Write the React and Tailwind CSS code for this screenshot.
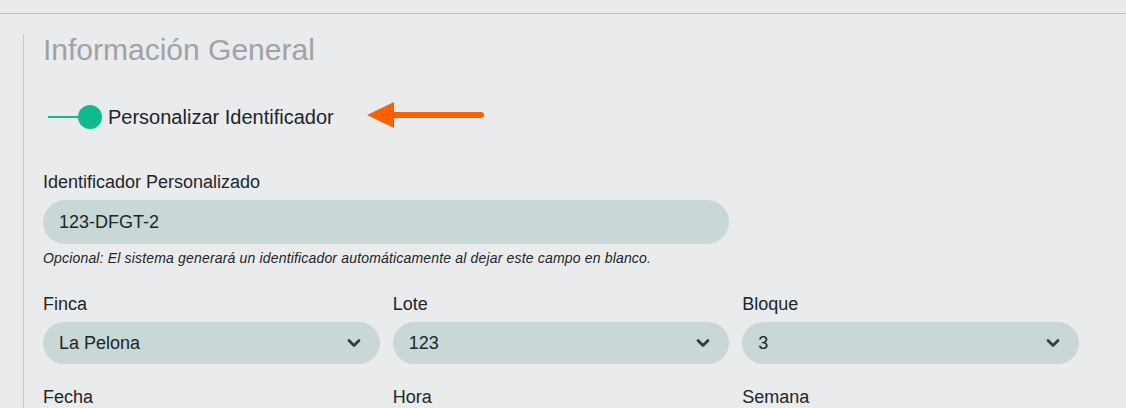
import { ChevronDown } from 'lucide-react';

function SelectField({ label, value }) {
  return (
    <div className="flex flex-col">
      <label className="text-[18px] text-[#212529] mb-[6px] leading-6">{label}</label>
      <div className="flex items-center justify-between h-[42px] rounded-full bg-[#c9d7d7] pl-4 pr-[16px]">
        <span className="text-[18px] text-[#212529]">{value}</span>
        <ChevronDown size={20} strokeWidth={3.2} className="text-[#343a40]" />
      </div>
    </div>
  );
}

export default function App() {
  return (
    <div className="min-h-screen bg-[#eaebed] font-['Liberation_Sans',Arial,sans-serif] overflow-hidden">
      <div className="h-[14px] border-b border-[#bdbdbd]" />
      <div className="ml-[23px] mt-5 border-l border-[#c8c8c8] pl-[19px] pr-[47px]">
        <h2 className="text-[30px] leading-8 text-[#a0a2a6]">Información General</h2>

        <div className="flex items-center mt-[35px] h-8">
          <div className="flex items-center ml-[5px]">
            <div className="w-[32px] h-[2px] bg-[#0fba91]" />
            <div className="w-[24px] h-[24px] rounded-full bg-[#0fba91] -ml-[2px]" />
          </div>
          <span className="ml-[6px] text-[20px] text-[#212529]">Personalizar Identificador</span>
          <svg width="120" height="26" viewBox="0 0 120 26" className="ml-[33px] mb-[4px]">
            <line x1="22" y1="13" x2="114" y2="13" stroke="#ff5f00" strokeWidth="6" strokeLinecap="round" />
            <polygon points="0,13 27,0 27,26" fill="#ff5f00" />
          </svg>
        </div>

        <div className="mt-[37px] w-[686px]">
          <label className="block text-[18px] text-[#212529] leading-6 mb-[6px]">Identificador Personalizado</label>
          <div className="h-[44px] rounded-full bg-[#c9d7d7] flex items-center pl-4">
            <span className="text-[18px] text-[#212529]">123-DFGT-2</span>
          </div>
          <p className="mt-[4px] text-[14px] leading-5 italic tracking-[0.17px] text-[#212529] whitespace-nowrap">
            Opcional: El sistema generará un identificador automáticamente al dejar este campo en blanco.
          </p>
        </div>

        <div className="grid grid-cols-3 gap-x-[13px] w-[1036px] mt-[24px]">
          <SelectField label="Finca" value="La Pelona" />
          <SelectField label="Lote" value="123" />
          <SelectField label="Bloque" value="3" />
        </div>

        <div className="grid grid-cols-3 gap-x-[13px] w-[1036px] mt-[21px]">
          <label className="text-[18px] text-[#212529] leading-6">Fecha</label>
          <label className="text-[18px] text-[#212529] leading-6">Hora</label>
          <label className="text-[18px] text-[#212529] leading-6">Semana</label>
        </div>
      </div>
    </div>
  );
}
